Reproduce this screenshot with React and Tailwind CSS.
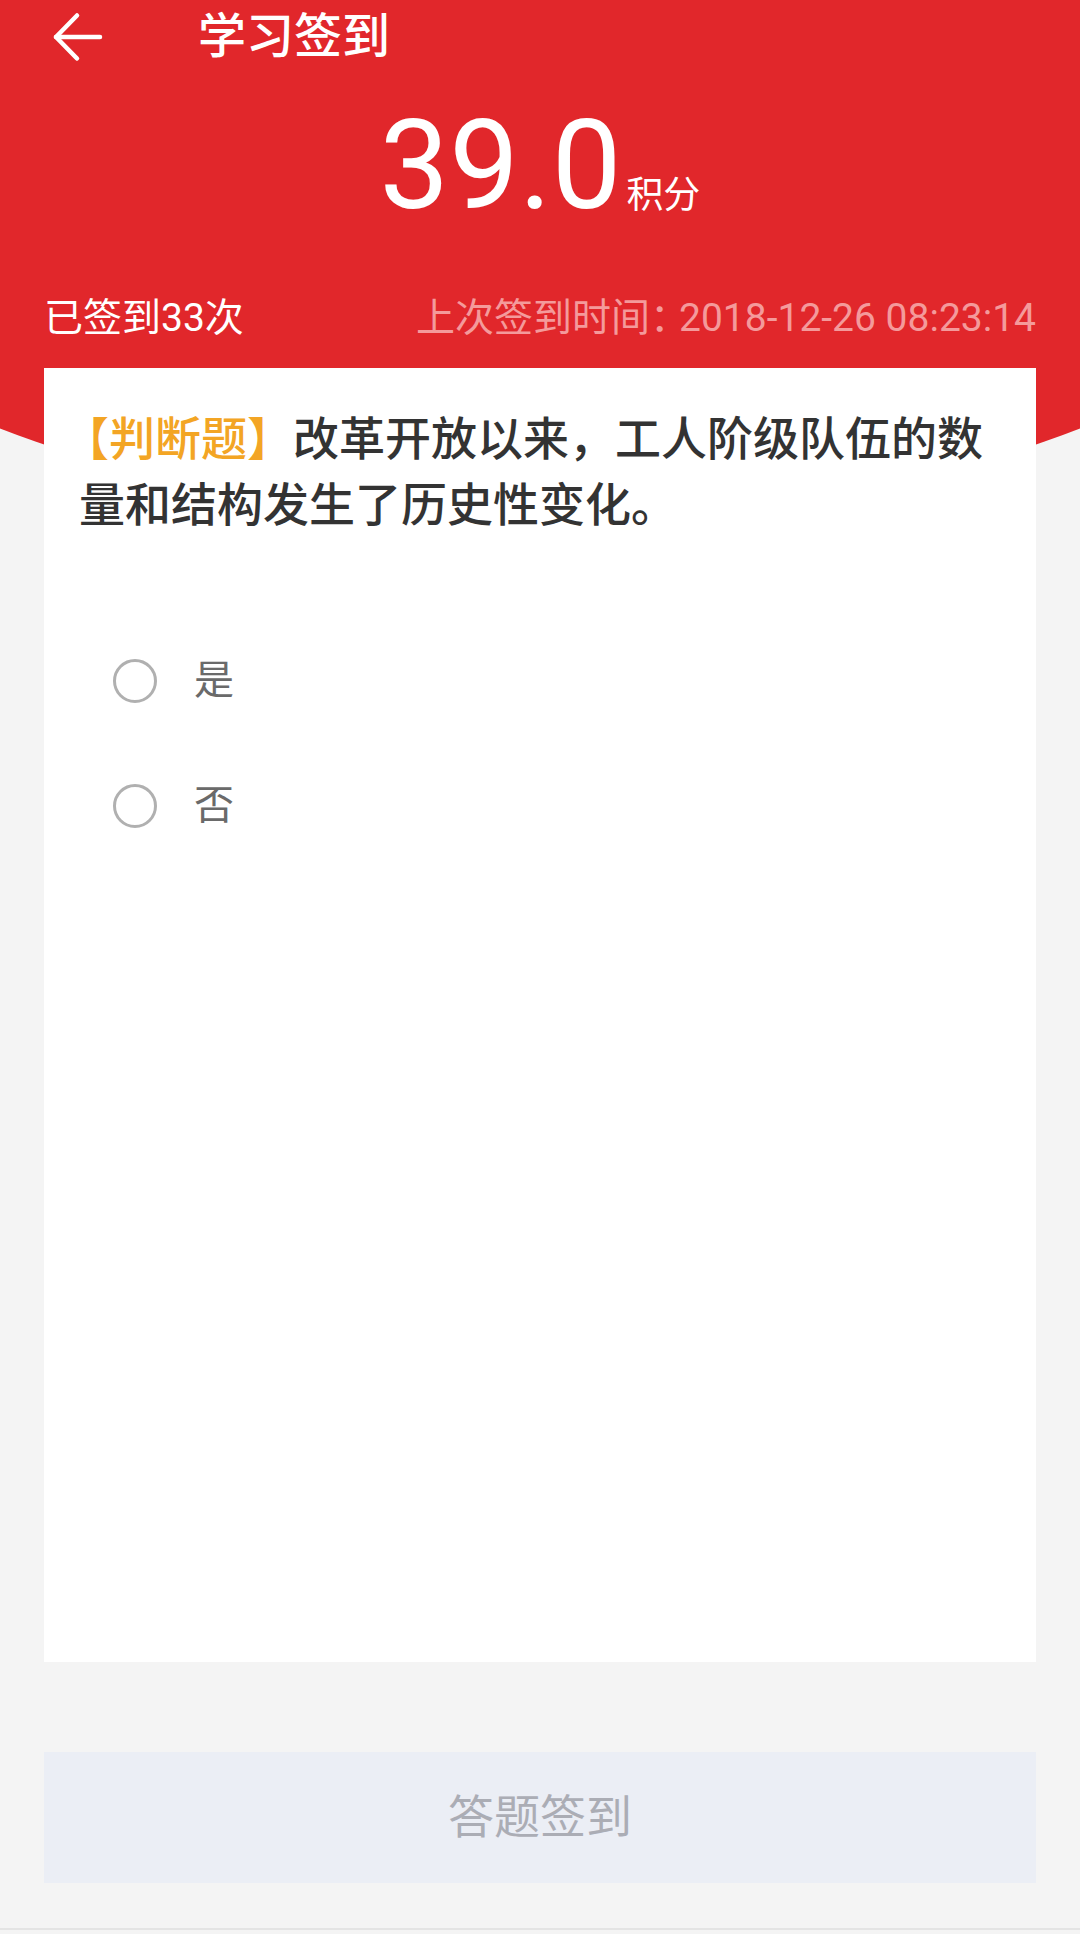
export default function App() {
  return (
    <div className="relative w-full h-[1934px] overflow-hidden bg-[#f4f4f4] font-['Roboto','Noto_Sans_CJK_SC',sans-serif]">
      {/* red arc behind the header */}
      <div className="absolute left-[-960px] top-[-2471px] w-[3000px] h-[3000px] rounded-full bg-[#e1272b]" />

      <div className="relative flex flex-col">
        <header className="h-[74px] flex items-center">
          <button className="ml-[52px] w-[52px] h-[52px] flex items-center justify-center">
            <svg width="52" height="52" viewBox="0 0 52 52" fill="none" stroke="white" strokeWidth="4.5" strokeLinecap="round" strokeLinejoin="round">
              <path d="M4 26H48" />
              <path d="M25 4.5L4 26L25 47.5" />
            </svg>
          </button>
          <h1 className="ml-[94px] text-[48px] leading-none font-medium text-white">学习签到</h1>
        </header>

        <div className="mt-[30px] h-[124px] flex justify-center items-baseline text-white">
          <span className="text-[124px] leading-none">39.0</span>
          <span className="ml-[5px] text-[37px] leading-none">积分</span>
        </div>

        <div className="mt-[65px] h-[50px] px-[44px] flex items-center justify-between text-[39px] leading-[50px]">
          <span className="text-white">已签到33次</span>
          <span className="text-[#f49a9b]">
            上次签到时间<span className="tracking-[-10px]">：</span>2018-12-26 08:23:14
          </span>
        </div>

        <section className="mt-[25px] mx-[44px] h-[1294px] bg-white pt-[34px] pl-[35px] pr-[26px]">
          <p className="indent-[-16px] font-['Noto_Sans_CJK_SC',sans-serif] text-[46px] leading-[66px] font-medium text-[#333333]">
            <span className="text-[#f3a524]">【判断题】</span>改革开放以来，工人阶级队伍的数量和结构发生了历史性变化。
          </p>

          <div className="mt-[84px] flex flex-col">
            {["是", "否"].map((label) => (
              <label key={label} className="h-[125px] flex items-center pl-[34px]">
                <span className="w-[44px] h-[44px] rounded-full border-[3px] border-[#b0b0b0]" />
                <span className="ml-[37px] text-[40px] leading-none text-[#6a6a6a]">{label}</span>
              </label>
            ))}
          </div>
        </section>

        <button className="mt-[90px] mx-[44px] h-[131px] bg-[#ebeef5] flex items-center justify-center text-[46px] text-[#abadb5]">
          答题签到
        </button>

        <div className="mt-[45px] h-[6px] border-t-2 border-[#e4e4e4]" />
      </div>
    </div>
  );
}
